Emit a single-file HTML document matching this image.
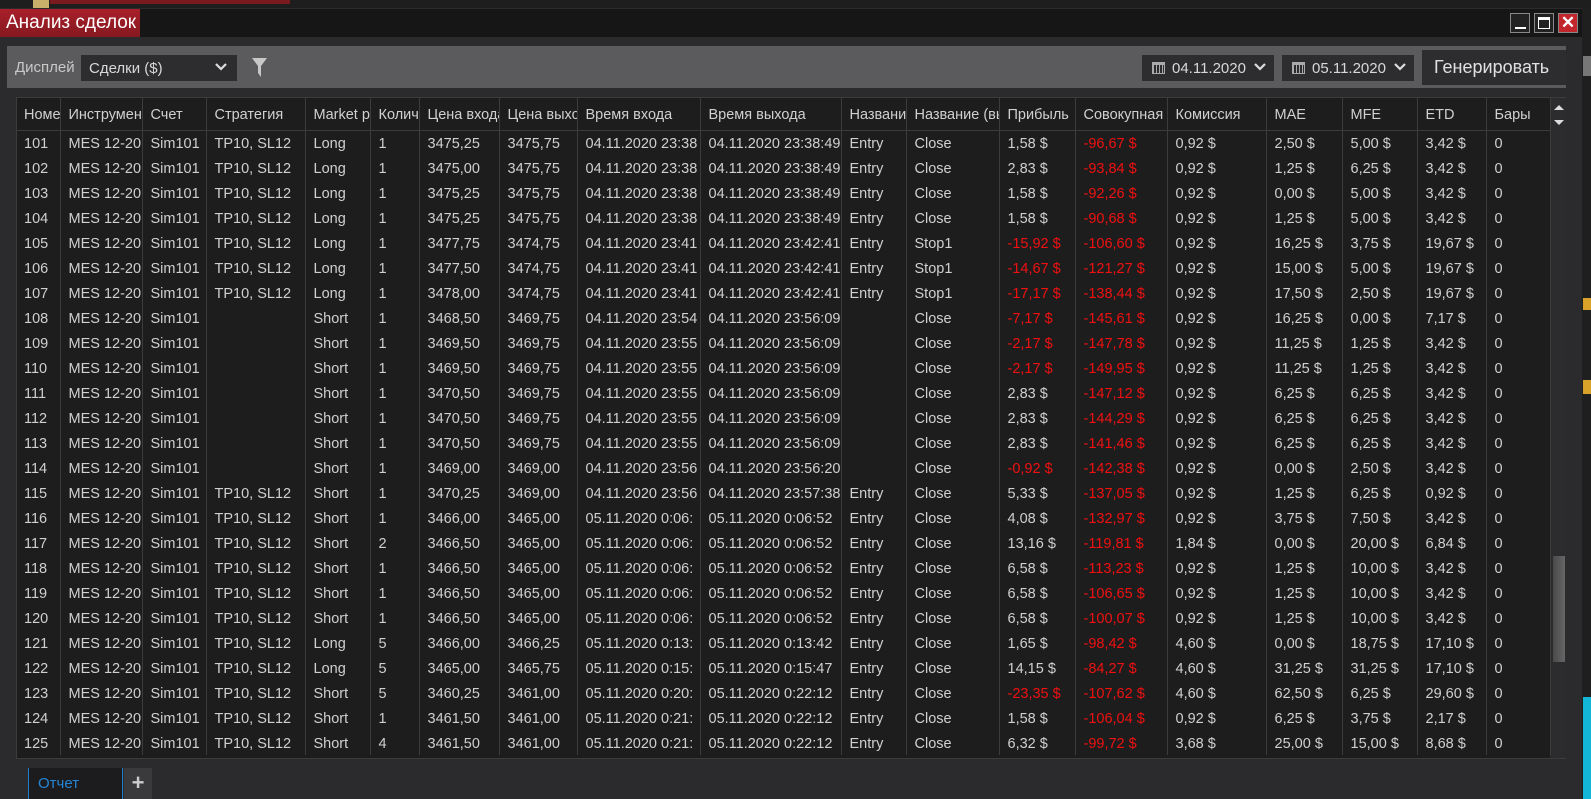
<!DOCTYPE html>
<html><head><meta charset="utf-8"><style>
*{margin:0;padding:0;box-sizing:border-box}
body{width:1591px;height:799px;background:#2a2a2c;font-family:"Liberation Sans",Arial,sans-serif;position:relative;overflow:hidden;color:#d2d2d2}
.abs{position:absolute}
table{border-collapse:collapse;table-layout:fixed;position:absolute;left:16px;top:97px;width:1534px;font-size:14.5px}
td,th{height:25px;border-right:1px solid #3c3c3c;padding:3px 0 0 8px;line-height:18px;white-space:nowrap;overflow:hidden;font-weight:normal;text-align:left;color:#d0d0d0}
th{height:33px;border-bottom:1px solid #3c3c3c;padding-top:4px}
.r{color:#f01010}
</style></head><body>
<div class="abs" style="left:0;top:0;width:1591px;height:8px;background:#1e1e1e"></div>
<div class="abs" style="left:50px;top:0;width:240px;height:4px;background:#7a1a1e"></div>
<div class="abs" style="left:33px;top:0;width:16px;height:8px;background:#c9b06a"></div>
<div class="abs" style="left:0;top:8px;width:1582px;height:791px;background:#2b2b2d"></div>
<div class="abs" style="left:0;top:9px;width:1582px;height:28px;background:#161616"></div>
<div class="abs" style="left:0;top:9px;width:140px;height:28px;background:linear-gradient(#a8202a,#861820);color:#fff;font-size:19px;padding:3px 0 0 6px">Анализ сделок</div>
<div class="abs" style="left:1510px;top:13px;width:20px;height:20px;border:1px solid #888;background:#222"><div style="position:absolute;left:4px;top:13px;width:11px;height:2px;background:#fff"></div></div>
<div class="abs" style="left:1534px;top:13px;width:20px;height:20px;border:1px solid #888;background:#222"><div style="position:absolute;left:3px;top:3px;width:12px;height:12px;border:1.5px solid #fff;border-top-width:3px"></div></div>
<div class="abs" style="left:1558px;top:13px;width:20px;height:20px;border:1px solid #888;background:#c0262c;color:#fff;font-size:17px;font-weight:bold;text-align:center;line-height:18px">✕</div>
<div class="abs" style="left:1582px;top:8px;width:9px;height:791px;background:#1f1f1f"></div>
<div class="abs" style="left:1583px;top:56px;width:8px;height:20px;background:#777"></div>
<div class="abs" style="left:1583px;top:298px;width:8px;height:12px;background:#d9a32a"></div>
<div class="abs" style="left:1583px;top:380px;width:8px;height:14px;background:#d9a32a"></div>
<div class="abs" style="left:1583px;top:697px;width:8px;height:102px;background:#13b6d6"></div>
<div class="abs" style="left:7px;top:46px;width:1559px;height:42px;background:#5b5b5d"></div>
<div class="abs" style="left:15px;top:59px;font-size:15px;color:#c8c8c8">Дисплей</div>
<div class="abs" style="left:81px;top:55px;width:156px;height:26px;background:#2d2d30;font-size:15px;padding:5px 0 0 8px;color:#d8d8d8">Сделки ($)<svg style="position:absolute;right:10px;top:8px" width="12" height="8"><path d="M1 1L6 6L11 1" stroke="#ddd" stroke-width="2.2" fill="none"/></svg></div>
<svg class="abs" style="left:252px;top:58px" width="16" height="20"><path d="M0 0H15L9 8V19L6 15V8Z" fill="#c8c8c8"/></svg>
<div class="abs" style="left:1142px;top:55px;width:132px;height:26px;background:#2d2d30;font-size:15px;padding:5px 0 0 30px;color:#d8d8d8">04.11.2020<svg style="position:absolute;right:8px;top:8px" width="12" height="8"><path d="M1 1L6 6L11 1" stroke="#ddd" stroke-width="2.2" fill="none"/></svg><div style="position:absolute;left:10px;top:7px;width:13px;height:12px;border:1px solid #aaa;border-top:3px solid #aaa;background:repeating-linear-gradient(90deg,#aaa 0 1px,transparent 1px 3px)"></div></div>
<div class="abs" style="left:1282px;top:55px;width:132px;height:26px;background:#2d2d30;font-size:15px;padding:5px 0 0 30px;color:#d8d8d8">05.11.2020<svg style="position:absolute;right:8px;top:8px" width="12" height="8"><path d="M1 1L6 6L11 1" stroke="#ddd" stroke-width="2.2" fill="none"/></svg><div style="position:absolute;left:10px;top:7px;width:13px;height:12px;border:1px solid #aaa;border-top:3px solid #aaa;background:repeating-linear-gradient(90deg,#aaa 0 1px,transparent 1px 3px)"></div></div>
<div class="abs" style="left:1422px;top:50px;width:144px;height:35px;background:#2d2d30;font-size:18px;padding:7px 0 0 12px;color:#e0e0e0">Генерировать</div>
<div class="abs" style="left:16px;top:97px;width:1550px;height:662px;background:#1d1d1e;border:1px solid #3c3c3c"></div>
<div class="abs" style="left:1550px;top:98px;width:16px;height:660px;background:#2c2c2e"></div>
<div class="abs" style="left:1553px;top:556px;width:12px;height:106px;background:linear-gradient(90deg,#4a4a4a,#666)"></div>
<svg class="abs" style="left:1553px;top:102px" width="12" height="26"><path d="M1 8L6 3L11 8Z M1 18L6 23L11 18Z" fill="#ddd"/></svg>
<table>
<colgroup><col style="width:44px"><col style="width:82px"><col style="width:64px"><col style="width:99px"><col style="width:65px"><col style="width:49px"><col style="width:80px"><col style="width:78px"><col style="width:123px"><col style="width:141px"><col style="width:65px"><col style="width:93px"><col style="width:76px"><col style="width:92px"><col style="width:99px"><col style="width:76px"><col style="width:75px"><col style="width:69px"><col style="width:64px"></colgroup>
<tr><th>Номер</th><th>Инструмент</th><th>Счет</th><th>Стратегия</th><th>Market pos.</th><th>Колич</th><th>Цена входа</th><th>Цена выхода</th><th>Время входа</th><th>Время выхода</th><th>Название</th><th>Название (выход)</th><th>Прибыль</th><th>Совокупная</th><th>Комиссия</th><th>MAE</th><th>MFE</th><th>ETD</th><th>Бары</th></tr>
<tr><td>101</td><td>MES 12-20</td><td>Sim101</td><td>TP10, SL12</td><td>Long</td><td>1</td><td>3475,25</td><td>3475,75</td><td>04.11.2020 23:38</td><td>04.11.2020 23:38:49</td><td>Entry</td><td>Close</td><td>1,58 $</td><td class="r">-96,67 $</td><td>0,92 $</td><td>2,50 $</td><td>5,00 $</td><td>3,42 $</td><td>0</td></tr>
<tr><td>102</td><td>MES 12-20</td><td>Sim101</td><td>TP10, SL12</td><td>Long</td><td>1</td><td>3475,00</td><td>3475,75</td><td>04.11.2020 23:38</td><td>04.11.2020 23:38:49</td><td>Entry</td><td>Close</td><td>2,83 $</td><td class="r">-93,84 $</td><td>0,92 $</td><td>1,25 $</td><td>6,25 $</td><td>3,42 $</td><td>0</td></tr>
<tr><td>103</td><td>MES 12-20</td><td>Sim101</td><td>TP10, SL12</td><td>Long</td><td>1</td><td>3475,25</td><td>3475,75</td><td>04.11.2020 23:38</td><td>04.11.2020 23:38:49</td><td>Entry</td><td>Close</td><td>1,58 $</td><td class="r">-92,26 $</td><td>0,92 $</td><td>0,00 $</td><td>5,00 $</td><td>3,42 $</td><td>0</td></tr>
<tr><td>104</td><td>MES 12-20</td><td>Sim101</td><td>TP10, SL12</td><td>Long</td><td>1</td><td>3475,25</td><td>3475,75</td><td>04.11.2020 23:38</td><td>04.11.2020 23:38:49</td><td>Entry</td><td>Close</td><td>1,58 $</td><td class="r">-90,68 $</td><td>0,92 $</td><td>1,25 $</td><td>5,00 $</td><td>3,42 $</td><td>0</td></tr>
<tr><td>105</td><td>MES 12-20</td><td>Sim101</td><td>TP10, SL12</td><td>Long</td><td>1</td><td>3477,75</td><td>3474,75</td><td>04.11.2020 23:41</td><td>04.11.2020 23:42:41</td><td>Entry</td><td>Stop1</td><td class="r">-15,92 $</td><td class="r">-106,60 $</td><td>0,92 $</td><td>16,25 $</td><td>3,75 $</td><td>19,67 $</td><td>0</td></tr>
<tr><td>106</td><td>MES 12-20</td><td>Sim101</td><td>TP10, SL12</td><td>Long</td><td>1</td><td>3477,50</td><td>3474,75</td><td>04.11.2020 23:41</td><td>04.11.2020 23:42:41</td><td>Entry</td><td>Stop1</td><td class="r">-14,67 $</td><td class="r">-121,27 $</td><td>0,92 $</td><td>15,00 $</td><td>5,00 $</td><td>19,67 $</td><td>0</td></tr>
<tr><td>107</td><td>MES 12-20</td><td>Sim101</td><td>TP10, SL12</td><td>Long</td><td>1</td><td>3478,00</td><td>3474,75</td><td>04.11.2020 23:41</td><td>04.11.2020 23:42:41</td><td>Entry</td><td>Stop1</td><td class="r">-17,17 $</td><td class="r">-138,44 $</td><td>0,92 $</td><td>17,50 $</td><td>2,50 $</td><td>19,67 $</td><td>0</td></tr>
<tr><td>108</td><td>MES 12-20</td><td>Sim101</td><td></td><td>Short</td><td>1</td><td>3468,50</td><td>3469,75</td><td>04.11.2020 23:54</td><td>04.11.2020 23:56:09</td><td></td><td>Close</td><td class="r">-7,17 $</td><td class="r">-145,61 $</td><td>0,92 $</td><td>16,25 $</td><td>0,00 $</td><td>7,17 $</td><td>0</td></tr>
<tr><td>109</td><td>MES 12-20</td><td>Sim101</td><td></td><td>Short</td><td>1</td><td>3469,50</td><td>3469,75</td><td>04.11.2020 23:55</td><td>04.11.2020 23:56:09</td><td></td><td>Close</td><td class="r">-2,17 $</td><td class="r">-147,78 $</td><td>0,92 $</td><td>11,25 $</td><td>1,25 $</td><td>3,42 $</td><td>0</td></tr>
<tr><td>110</td><td>MES 12-20</td><td>Sim101</td><td></td><td>Short</td><td>1</td><td>3469,50</td><td>3469,75</td><td>04.11.2020 23:55</td><td>04.11.2020 23:56:09</td><td></td><td>Close</td><td class="r">-2,17 $</td><td class="r">-149,95 $</td><td>0,92 $</td><td>11,25 $</td><td>1,25 $</td><td>3,42 $</td><td>0</td></tr>
<tr><td>111</td><td>MES 12-20</td><td>Sim101</td><td></td><td>Short</td><td>1</td><td>3470,50</td><td>3469,75</td><td>04.11.2020 23:55</td><td>04.11.2020 23:56:09</td><td></td><td>Close</td><td>2,83 $</td><td class="r">-147,12 $</td><td>0,92 $</td><td>6,25 $</td><td>6,25 $</td><td>3,42 $</td><td>0</td></tr>
<tr><td>112</td><td>MES 12-20</td><td>Sim101</td><td></td><td>Short</td><td>1</td><td>3470,50</td><td>3469,75</td><td>04.11.2020 23:55</td><td>04.11.2020 23:56:09</td><td></td><td>Close</td><td>2,83 $</td><td class="r">-144,29 $</td><td>0,92 $</td><td>6,25 $</td><td>6,25 $</td><td>3,42 $</td><td>0</td></tr>
<tr><td>113</td><td>MES 12-20</td><td>Sim101</td><td></td><td>Short</td><td>1</td><td>3470,50</td><td>3469,75</td><td>04.11.2020 23:55</td><td>04.11.2020 23:56:09</td><td></td><td>Close</td><td>2,83 $</td><td class="r">-141,46 $</td><td>0,92 $</td><td>6,25 $</td><td>6,25 $</td><td>3,42 $</td><td>0</td></tr>
<tr><td>114</td><td>MES 12-20</td><td>Sim101</td><td></td><td>Short</td><td>1</td><td>3469,00</td><td>3469,00</td><td>04.11.2020 23:56</td><td>04.11.2020 23:56:20</td><td></td><td>Close</td><td class="r">-0,92 $</td><td class="r">-142,38 $</td><td>0,92 $</td><td>0,00 $</td><td>2,50 $</td><td>3,42 $</td><td>0</td></tr>
<tr><td>115</td><td>MES 12-20</td><td>Sim101</td><td>TP10, SL12</td><td>Short</td><td>1</td><td>3470,25</td><td>3469,00</td><td>04.11.2020 23:56</td><td>04.11.2020 23:57:38</td><td>Entry</td><td>Close</td><td>5,33 $</td><td class="r">-137,05 $</td><td>0,92 $</td><td>1,25 $</td><td>6,25 $</td><td>0,92 $</td><td>0</td></tr>
<tr><td>116</td><td>MES 12-20</td><td>Sim101</td><td>TP10, SL12</td><td>Short</td><td>1</td><td>3466,00</td><td>3465,00</td><td>05.11.2020 0:06:</td><td>05.11.2020 0:06:52</td><td>Entry</td><td>Close</td><td>4,08 $</td><td class="r">-132,97 $</td><td>0,92 $</td><td>3,75 $</td><td>7,50 $</td><td>3,42 $</td><td>0</td></tr>
<tr><td>117</td><td>MES 12-20</td><td>Sim101</td><td>TP10, SL12</td><td>Short</td><td>2</td><td>3466,50</td><td>3465,00</td><td>05.11.2020 0:06:</td><td>05.11.2020 0:06:52</td><td>Entry</td><td>Close</td><td>13,16 $</td><td class="r">-119,81 $</td><td>1,84 $</td><td>0,00 $</td><td>20,00 $</td><td>6,84 $</td><td>0</td></tr>
<tr><td>118</td><td>MES 12-20</td><td>Sim101</td><td>TP10, SL12</td><td>Short</td><td>1</td><td>3466,50</td><td>3465,00</td><td>05.11.2020 0:06:</td><td>05.11.2020 0:06:52</td><td>Entry</td><td>Close</td><td>6,58 $</td><td class="r">-113,23 $</td><td>0,92 $</td><td>1,25 $</td><td>10,00 $</td><td>3,42 $</td><td>0</td></tr>
<tr><td>119</td><td>MES 12-20</td><td>Sim101</td><td>TP10, SL12</td><td>Short</td><td>1</td><td>3466,50</td><td>3465,00</td><td>05.11.2020 0:06:</td><td>05.11.2020 0:06:52</td><td>Entry</td><td>Close</td><td>6,58 $</td><td class="r">-106,65 $</td><td>0,92 $</td><td>1,25 $</td><td>10,00 $</td><td>3,42 $</td><td>0</td></tr>
<tr><td>120</td><td>MES 12-20</td><td>Sim101</td><td>TP10, SL12</td><td>Short</td><td>1</td><td>3466,50</td><td>3465,00</td><td>05.11.2020 0:06:</td><td>05.11.2020 0:06:52</td><td>Entry</td><td>Close</td><td>6,58 $</td><td class="r">-100,07 $</td><td>0,92 $</td><td>1,25 $</td><td>10,00 $</td><td>3,42 $</td><td>0</td></tr>
<tr><td>121</td><td>MES 12-20</td><td>Sim101</td><td>TP10, SL12</td><td>Long</td><td>5</td><td>3466,00</td><td>3466,25</td><td>05.11.2020 0:13:</td><td>05.11.2020 0:13:42</td><td>Entry</td><td>Close</td><td>1,65 $</td><td class="r">-98,42 $</td><td>4,60 $</td><td>0,00 $</td><td>18,75 $</td><td>17,10 $</td><td>0</td></tr>
<tr><td>122</td><td>MES 12-20</td><td>Sim101</td><td>TP10, SL12</td><td>Long</td><td>5</td><td>3465,00</td><td>3465,75</td><td>05.11.2020 0:15:</td><td>05.11.2020 0:15:47</td><td>Entry</td><td>Close</td><td>14,15 $</td><td class="r">-84,27 $</td><td>4,60 $</td><td>31,25 $</td><td>31,25 $</td><td>17,10 $</td><td>0</td></tr>
<tr><td>123</td><td>MES 12-20</td><td>Sim101</td><td>TP10, SL12</td><td>Short</td><td>5</td><td>3460,25</td><td>3461,00</td><td>05.11.2020 0:20:</td><td>05.11.2020 0:22:12</td><td>Entry</td><td>Close</td><td class="r">-23,35 $</td><td class="r">-107,62 $</td><td>4,60 $</td><td>62,50 $</td><td>6,25 $</td><td>29,60 $</td><td>0</td></tr>
<tr><td>124</td><td>MES 12-20</td><td>Sim101</td><td>TP10, SL12</td><td>Short</td><td>1</td><td>3461,50</td><td>3461,00</td><td>05.11.2020 0:21:</td><td>05.11.2020 0:22:12</td><td>Entry</td><td>Close</td><td>1,58 $</td><td class="r">-106,04 $</td><td>0,92 $</td><td>6,25 $</td><td>3,75 $</td><td>2,17 $</td><td>0</td></tr>
<tr><td>125</td><td>MES 12-20</td><td>Sim101</td><td>TP10, SL12</td><td>Short</td><td>4</td><td>3461,50</td><td>3461,00</td><td>05.11.2020 0:21:</td><td>05.11.2020 0:22:12</td><td>Entry</td><td>Close</td><td>6,32 $</td><td class="r">-99,72 $</td><td>3,68 $</td><td>25,00 $</td><td>15,00 $</td><td>8,68 $</td><td>0</td></tr>
</table>
<div class="abs" style="left:0;top:768px;width:1582px;height:31px;background:#2b2b2d"></div>
<div class="abs" style="left:28px;top:768px;width:95px;height:31px;background:#1c1c1e;border-left:1px solid #1e7fd0;border-right:1px solid #1e7fd0;color:#2486d6;font-size:15px;padding:7px 0 0 9px">Отчет</div>
<div class="abs" style="left:124px;top:768px;width:28px;height:31px;background:#3a3a3c;color:#ccc;font-size:22px;font-weight:bold;text-align:center;line-height:29px">+</div>
</body></html>
